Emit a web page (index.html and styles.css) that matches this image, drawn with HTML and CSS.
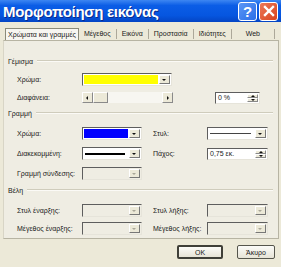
FILE: index.html
```html
<!DOCTYPE html>
<html lang="el">
<head>
    <meta charset="UTF-8">
    <title>Μορφοποίηση εικόνας</title>
    <link rel="stylesheet" href="styles.css">
</head>
<body>

<div class="dialog">
    <div class="titlebar">
        <span class="title">Μορφοποίηση εικόνας</span>
        <span class="tbtn help">?</span>
        <span class="tbtn close">
            <svg width="12" height="12" viewBox="0 0 12 12"><path d="M2 2L10 10M10 2L2 10" stroke="#fff" stroke-width="2.4" stroke-linecap="square"/></svg>
        </span>
    </div>

    <div class="tabs">
        <span class="tab active">Χρώματα και γραμμές</span>
        <span class="tab">Μέγεθος</span>
        <span class="tab">Εικόνα</span>
        <span class="tab">Προστασία</span>
        <span class="tab">Ιδιότητες</span>
        <span class="tab web">Web</span>
    </div>

    <div class="panel">
        <div class="group">Γέμισμα</div>
        <div class="row r-fill1">
            <span class="label">Χρώμα:</span>
            <span class="combo wide"><span class="field swatch yellow"></span><span class="drop"></span></span>
        </div>
        <div class="row r-fill2">
            <span class="label">Διαφάνεια:</span>
            <span class="scroll">
                <span class="sbtn left"></span>
                <span class="thumb"></span>
                <span class="track"></span>
                <span class="sbtn right"></span>
            </span>
            <span class="spin pct"><span class="field">0 %</span><span class="arrows"><i class="up"></i><i class="down"></i></span></span>
        </div>

        <div class="group">Γραμμή</div>
        <div class="row first">
            <span class="label">Χρώμα:</span>
            <span class="combo"><span class="field swatch blue"></span><span class="drop"></span></span>
            <span class="label2">Στυλ:</span>
            <span class="combo right"><span class="field"><span class="stroke thin"></span></span><span class="drop"></span></span>
        </div>
        <div class="row">
            <span class="label">Διακεκομμένη:</span>
            <span class="combo"><span class="field"><span class="stroke thick"></span></span><span class="drop"></span></span>
            <span class="label2">Πάχος:</span>
            <span class="spin right"><span class="field">0,75 εκ.</span><span class="arrows"><i class="up"></i><i class="down"></i></span></span>
        </div>
        <div class="row">
            <span class="label">Γραμμή σύνδεσης:</span>
            <span class="combo off"><span class="field"></span><span class="drop"></span></span>
        </div>

        <div class="group">Βέλη</div>
        <div class="row first">
            <span class="label">Στυλ έναρξης:</span>
            <span class="combo off"><span class="field"></span><span class="drop"></span></span>
            <span class="label2">Στυλ λήξης:</span>
            <span class="combo right off"><span class="field"></span><span class="drop"></span></span>
        </div>
        <div class="row short">
            <span class="label">Μέγεθος έναρξης:</span>
            <span class="combo off"><span class="field"></span><span class="drop"></span></span>
            <span class="label2">Μέγεθος λήξης:</span>
            <span class="combo right off"><span class="field"></span><span class="drop"></span></span>
        </div>
    </div>

    <div class="buttons">
        <button class="btn default">OK</button>
        <button class="btn cancel">Άκυρο</button>
    </div>
</div>

</body>
</html>
```

FILE: styles.css
```css
body {
    margin: 0;
    background: #ece9d8;
    font-family: "Liberation Sans", Arial, sans-serif;
    font-size: 7px;
    color: #1a1a1a;
}
.dialog {
    width: 281px;
    height: 267px;
    overflow: hidden;
}

/* title bar */
.titlebar {
    height: 22px;
    display: flex;
    align-items: center;
    padding: 0 3px 0 3px;
    background: linear-gradient(#3d86f2, #0b5de6 25%, #0656e0 70%, #0445c4);
}
.title {
    flex: 1;
    color: #fff;
    font-size: 15px;
    font-weight: bold;
    letter-spacing: -0.3px;
    text-shadow: 1px 1px 0 #0a2a8a;
}
.tbtn {
    width: 17px;
    height: 17px;
    border: 1px solid #fff;
    border-radius: 3px;
    display: flex;
    align-items: center;
    justify-content: center;
    color: #fff;
    font-weight: bold;
    font-size: 15px;
}
.help {
    background: linear-gradient(135deg, #5b97f5, #2a6ee8);
    margin-right: 2px;
}
.close {
    background: linear-gradient(135deg, #ec7a5a, #d9431e);
}

/* tabs */
.tabs {
    display: flex;
    align-items: center;
    height: 12px;
    margin-top: 6px;
    padding-left: 5px;
}
.tab {
    padding: 0 5px;
    height: 10px;
    line-height: 10px;
    border-right: 1px solid #aca899;
}
.tab.active {
    height: 11px;
    line-height: 11px;
    padding: 0 2px;
    border: 1px solid #8b8b7a;
    border-bottom: none;
    background: #f7f6f1;
}
.tab.web {
    padding: 0 14px;
}

/* panel */
.panel {
    margin: 0 0 0 3px;
    width: 270px;
    height: 197px;
    border: 1px solid #b7b4a3;
    border-left-color: #d8d5c6;
    background: #efede3;
    padding: 0 0 0 4px;
    box-sizing: content-box;
}
.group {
    display: flex;
    align-items: center;
    height: 10px;
    margin-top: 5px;
    margin-right: 5px;
}
.group:first-child {
    margin-top: 15px;
}
.group::after {
    content: "";
    flex: 1;
    margin-left: 4px;
    border-top: 1px solid #cfccbc;
    border-bottom: 1px solid #fbfaf6;
}
.row {
    display: flex;
    align-items: center;
    height: 13px;
    margin-top: 7px;
    padding-left: 9px;
}
.row.first {
    margin-top: 9px;
}
.row.short {
    margin-top: 5px;
}
.r-fill2 {
    margin-top: 6px;
    height: 11px;
}
.label {
    width: 65px;
}
.label2 {
    width: 54px;
    margin-left: 11px;
}

/* combo boxes */
.combo {
    display: flex;
    width: 60px;
    height: 13px;
    box-sizing: border-box;
    border: 1px solid;
    border-color: #5e5e5e #e6e4da #e6e4da #5e5e5e;
    background: #fff;
    padding: 1px;
}
.combo.wide {
    width: 90px;
}
.combo.right {
    width: 61px;
}
.field {
    flex: 1;
    display: flex;
    align-items: center;
    padding-left: 1px;
}
.swatch.yellow {
    background: #ffff00;
    margin-right: 1px;
}
.swatch.blue {
    background: #0000ff;
    margin-right: 1px;
}
.stroke {
    display: block;
    width: 100%;
    margin-right: 4px;
    background: #000;
}
.stroke.thin {
    height: 1px;
    background: #444;
}
.stroke.thick {
    height: 2px;
}
.drop {
    width: 9px;
    background: #ece9d8;
    border: 1px solid;
    border-color: #fff #777 #777 #fff;
    position: relative;
}
.drop::after {
    content: "";
    position: absolute;
    left: 2px;
    top: 3px;
    border-left: 2px solid transparent;
    border-right: 2px solid transparent;
    border-top: 2px solid #111;
}
.combo.off {
    background: #efede3;
}
.combo.off .drop::after {
    border-top-color: #a8a697;
}

/* scrollbar */
.scroll {
    display: flex;
    width: 91px;
    height: 11px;
    background: #f7f6f1;
}
.sbtn, .thumb {
    width: 11px;
    box-sizing: border-box;
    background: #ece9d8;
    border: 1px solid;
    border-color: #fff #8a8a8a #8a8a8a #fff;
    position: relative;
}
.thumb {
    width: 15px;
}
.track {
    flex: 1;
}
.sbtn::after {
    content: "";
    position: absolute;
    top: 3px;
    border-top: 2px solid transparent;
    border-bottom: 2px solid transparent;
}
.sbtn.left::after {
    left: 3px;
    border-right: 2px solid #111;
}
.sbtn.right::after {
    left: 4px;
    border-left: 2px solid #111;
}

/* spinners */
.spin {
    display: flex;
    height: 12px;
    box-sizing: border-box;
    border: 1px solid;
    border-color: #5e5e5e #e6e4da #e6e4da #5e5e5e;
    background: #fff;
    padding: 1px;
}
.spin.pct {
    width: 45px;
    margin-left: 42px;
}
.spin.right {
    width: 61px;
}
.arrows {
    width: 11px;
    display: flex;
    flex-direction: column;
}
.arrows i {
    flex: 1;
    background: #ece9d8;
    border: 1px solid;
    border-color: #fff #888 #888 #fff;
    position: relative;
}
.arrows i::after {
    content: "";
    position: absolute;
    left: 3px;
    top: 0;
    border-left: 2px solid transparent;
    border-right: 2px solid transparent;
}
.arrows .up::after {
    border-bottom: 2px solid #111;
}
.arrows .down::after {
    border-top: 2px solid #111;
}

/* bottom buttons */
.buttons {
    display: flex;
    justify-content: flex-end;
    margin-top: 6px;
    padding-right: 6px;
}
.btn {
    height: 14px;
    padding: 0;
    font-family: inherit;
    font-size: 7px;
    color: #1a1a1a;
    background: linear-gradient(#fbfbf8, #e6e3d6);
    border: 1px solid #55554c;
    border-radius: 2px;
}
.btn.default {
    width: 46px;
    border: 2px solid #3f3f38;
}
.btn.cancel {
    width: 38px;
    margin-left: 14px;
}
```
